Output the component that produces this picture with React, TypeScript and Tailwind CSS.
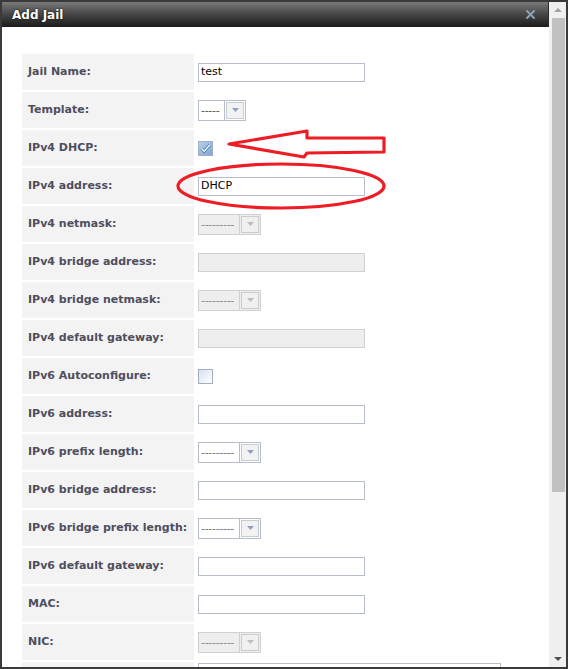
import React from "react";

type Field =
  | { label: string; kind: "input"; value?: string; disabled?: boolean }
  | { label: string; kind: "select"; text: string; disabled?: boolean }
  | { label: string; kind: "check"; checked?: boolean }
  | { label: string; kind: "area" };

const fields: Field[] = [
  { label: "Jail Name:", kind: "input", value: "test" },
  { label: "Template:", kind: "select", text: "-----" },
  { label: "IPv4 DHCP:", kind: "check", checked: true },
  { label: "IPv4 address:", kind: "input", value: "DHCP" },
  { label: "IPv4 netmask:", kind: "select", text: "---------", disabled: true },
  { label: "IPv4 bridge address:", kind: "input", disabled: true },
  { label: "IPv4 bridge netmask:", kind: "select", text: "---------", disabled: true },
  { label: "IPv4 default gateway:", kind: "input", disabled: true },
  { label: "IPv6 Autoconfigure:", kind: "check" },
  { label: "IPv6 address:", kind: "input" },
  { label: "IPv6 prefix length:", kind: "select", text: "---------" },
  { label: "IPv6 bridge address:", kind: "input" },
  { label: "IPv6 bridge prefix length:", kind: "select", text: "---------" },
  { label: "IPv6 default gateway:", kind: "input" },
  { label: "MAC:", kind: "input" },
  { label: "NIC:", kind: "select", text: "---------", disabled: true },
  { label: "", kind: "area" },
];

function TextInput({ value, disabled }: { value?: string; disabled?: boolean }) {
  return (
    <div
      className={`w-[167px] h-[19px] border px-[2px] flex items-center text-[11px] text-black ${
        disabled ? "bg-[#eeeeee] border-[#d0d0d0]" : "bg-white border-[#b8bdcb]"
      }`}
    >
      {value}
    </div>
  );
}

function Select({ text, disabled }: { text: string; disabled?: boolean }) {
  const short = text.length < 6;
  return (
    <div
      className={`h-[21px] flex border ${
        disabled ? "bg-[#eeeeee] border-[#d0d0d0]" : "bg-white border-[#b8bdcb]"
      }`}
    >
      <div
        className={`flex items-center pl-[2px] text-[11px] leading-none tracking-[-0.3px] ${
          short ? "w-[25px] text-[#555]" : "w-[40px] text-[#777]"
        } ${disabled ? "text-[#888]" : ""}`}
      >
        {text}
      </div>
      <div
        className={`w-[21px] border-l p-[1px] ${disabled ? "border-[#d0d0d0]" : "border-[#b8bdcb]"}`}
      >
        <div
          className={`h-full border flex items-center justify-center ${
            disabled ? "border-[#cccccc] bg-[#f0f0f0]" : "border-[#c8ccd6] bg-[#f2f2f2]"
          }`}
        >
          <svg width="7" height="4" viewBox="0 0 7 4">
            <path d="M0 0h7L3.5 4z" fill={disabled ? "#bdbdbd" : "#8f9fc6"} />
          </svg>
        </div>
      </div>
    </div>
  );
}

function Checkbox({ checked }: { checked?: boolean }) {
  return (
    <div
      className={`w-[15px] h-[15px] border border-[#a3aec4] ${
        checked
          ? "bg-gradient-to-br from-[#b8d0ec] to-[#7ea6d6]"
          : "bg-gradient-to-br from-[#d6e2f1] to-[#ffffff]"
      }`}
    >
      {checked && (
        <svg width="13" height="13" viewBox="0 0 13 13">
          <path d="M2.5 6.5l2.7 2.8 5.5-6.3" fill="none" stroke="#4a78b5" strokeWidth="3" />
          <path d="M2.5 6.5l2.7 2.8 5.5-6.3" fill="none" stroke="#ffffff" strokeWidth="1.4" />
        </svg>
      )}
    </div>
  );
}

function Row({ field }: { field: Field }) {
  if (field.kind === "area") {
    // tall textarea row, only its top edge is in view
    return (
      <div className="flex h-[90px] shrink-0">
        <div className="w-[172px] bg-[#f3f3f3]" />
        <div className="pl-[4px] pt-[1px]">
          <div className="w-[303px] h-[80px] border border-[#b8bdcb] bg-white" />
        </div>
      </div>
    );
  }
  return (
    <div className="flex h-[36px] shrink-0">
      <div className="w-[172px] bg-[#f3f3f3] pl-[6px] flex items-center font-bold text-[11px] text-[#4e4e5e]">
        {field.label}
      </div>
      <div className="pl-[4px] flex items-center">
        {field.kind === "input" && <TextInput value={field.value} disabled={field.disabled} />}
        {field.kind === "select" && <Select text={field.text} disabled={field.disabled} />}
        {field.kind === "check" && <Checkbox checked={field.checked} />}
      </div>
    </div>
  );
}

export default function App() {
  return (
    <div
      className="relative w-[568px] h-[669px] overflow-hidden border-2 border-[#3a3a3a] bg-white flex"
      style={{ fontFamily: '"DejaVu Sans", Verdana, sans-serif' }}
    >
      {/* dialog body */}
      <div className="w-[547px] flex flex-col">
        <div className="h-[25px] shrink-0 border-r border-[#2a2a2a] bg-gradient-to-b from-[#7a7a7a] via-[#454545] to-[#1c1c1c] flex items-center justify-between pl-[10px] pr-[12px]">
          <span className="text-white font-bold text-[12px] [text-shadow:0_0_2px_#000]">Add Jail</span>
          <svg width="11" height="11" viewBox="0 0 11 11">
            <path d="M1.5 1.5l8 8M9.5 1.5l-8 8" stroke="#7d8ea6" strokeWidth="2.4" />
            <path d="M1.5 1.5l8 8M9.5 1.5l-8 8" stroke="#a9b6c8" strokeWidth="0.8" />
          </svg>
        </div>
        <div className="flex-1 overflow-hidden pt-[27px] pl-[20px] flex flex-col gap-[2px]">
          {fields.map((f, i) => (
            <Row key={i} field={f} />
          ))}
        </div>
      </div>

      {/* scrollbar */}
      <div className="w-[17px] bg-[#f0f0f0] flex flex-col">
        <div className="h-[16px] flex items-center justify-center">
          <svg width="8" height="4" viewBox="0 0 8 4">
            <path d="M0 4h8L4 0z" fill="#a3a3a3" />
          </svg>
        </div>
        <div className="w-[13px] h-[474px] bg-[#c1c1c1] ml-[3px]" />
        <div className="flex-1" />
        <div className="h-[16px] flex items-center justify-center">
          <svg width="8" height="4" viewBox="0 0 8 4">
            <path d="M0 0h8L4 4z" fill="#505050" />
          </svg>
        </div>
      </div>

      {/* red pen marks drawn over the form */}
      <svg
        className="absolute left-[-2px] top-[-2px] pointer-events-none"
        width="568"
        height="669"
        viewBox="0 0 568 669"
      >
        <path
          d="M229 144 L307 131 L307 138 L384 138 L384 152 L307 153 L304 157 Z"
          fill="none"
          stroke="#ee1c24"
          strokeWidth="3.2"
          strokeLinejoin="round"
        />
        <ellipse cx="281" cy="186" rx="103" ry="22" fill="none" stroke="#ee1c24" strokeWidth="3.2" />
      </svg>
    </div>
  );
}
